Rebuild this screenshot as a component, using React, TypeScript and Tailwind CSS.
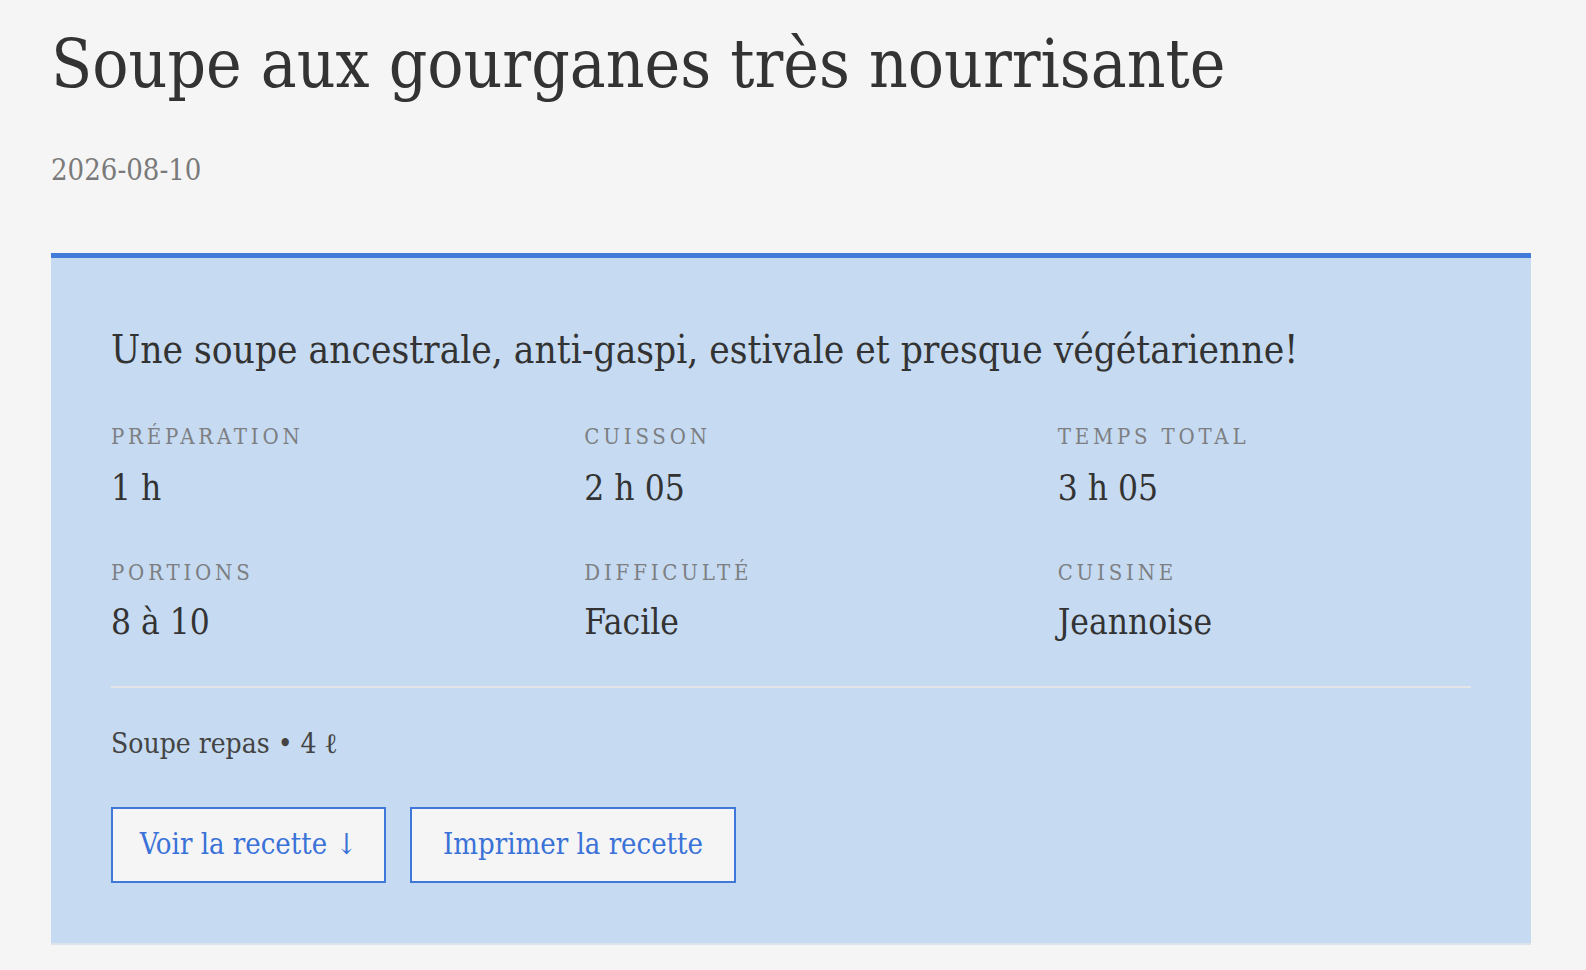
import React from "react";

const font = { fontFamily: '"DejaVu Serif Condensed", "DejaVu Serif", serif' };

function Stat({ label, value, gap }: { label: string; value: string; gap: string }) {
  return (
    <div className="flex flex-col">
      <div className="text-[22px] leading-[28px] tracking-[3.8px] uppercase text-[#7d7f82] whitespace-nowrap">{label}</div>
      <div className={`${gap} text-[35px] leading-[40px] text-[#333333] whitespace-nowrap`}>{value}</div>
    </div>
  );
}

export default function App() {
  return (
    <div className="min-h-screen w-full bg-[#f5f5f5] font-stretch-condensed" style={font}>
      <div className="pl-[51px] pt-[24px]">
        <h1 className="text-[67px] leading-[80px] font-normal text-[#333333] whitespace-nowrap">
          Soupe aux gourganes très nourrisante
        </h1>
        <div className="mt-[50px] text-[29px] leading-[32px] text-[#7a7a7a]">2026-08-10</div>
        <section className="mt-[67px] w-[1480px] bg-[#c6dbf2] border-t-[5px] border-t-[#437bdb] border-b-2 border-b-[#dde3ea] px-[60px] pt-[61px] pb-[60px]">
          <p className="text-[38.5px] leading-[62px] text-[#333333] whitespace-nowrap">
            Une soupe ancestrale, anti-gaspi, estivale et presque végétarienne!
          </p>
          <div className="mt-[42px] grid grid-cols-3 gap-x-[60px] gap-y-[51px]">
            <Stat label="Préparation" value="1 h" gap="mt-[17px]" />
            <Stat label="Cuisson" value="2 h 05" gap="mt-[17px]" />
            <Stat label="Temps total" value="3 h 05" gap="mt-[17px]" />
            <Stat label="Portions" value="8 à 10" gap="mt-[15px]" />
            <Stat label="Difficulté" value="Facile" gap="mt-[15px]" />
            <Stat label="Cuisine" value="Jeannoise" gap="mt-[15px]" />
          </div>
          <div className="mt-[44px] h-[2px] bg-[#e2e4e6]" />
          <div className="mt-[40px] text-[28px] leading-[32px] text-[#444444] whitespace-nowrap">Soupe repas • 4 ℓ</div>
          <div className="mt-[47px] flex gap-[24px]">
            <button className="h-[76px] w-[275px] border-2 border-[#3f78d9] bg-[#f5f5f5] text-[29px] text-[#3a72d8] whitespace-nowrap">
              Voir la recette ↓
            </button>
            <button className="h-[76px] w-[326px] border-2 border-[#3f78d9] bg-[#f5f5f5] text-[29px] text-[#3a72d8] whitespace-nowrap">
              Imprimer la recette
            </button>
          </div>
        </section>
      </div>
    </div>
  );
}
